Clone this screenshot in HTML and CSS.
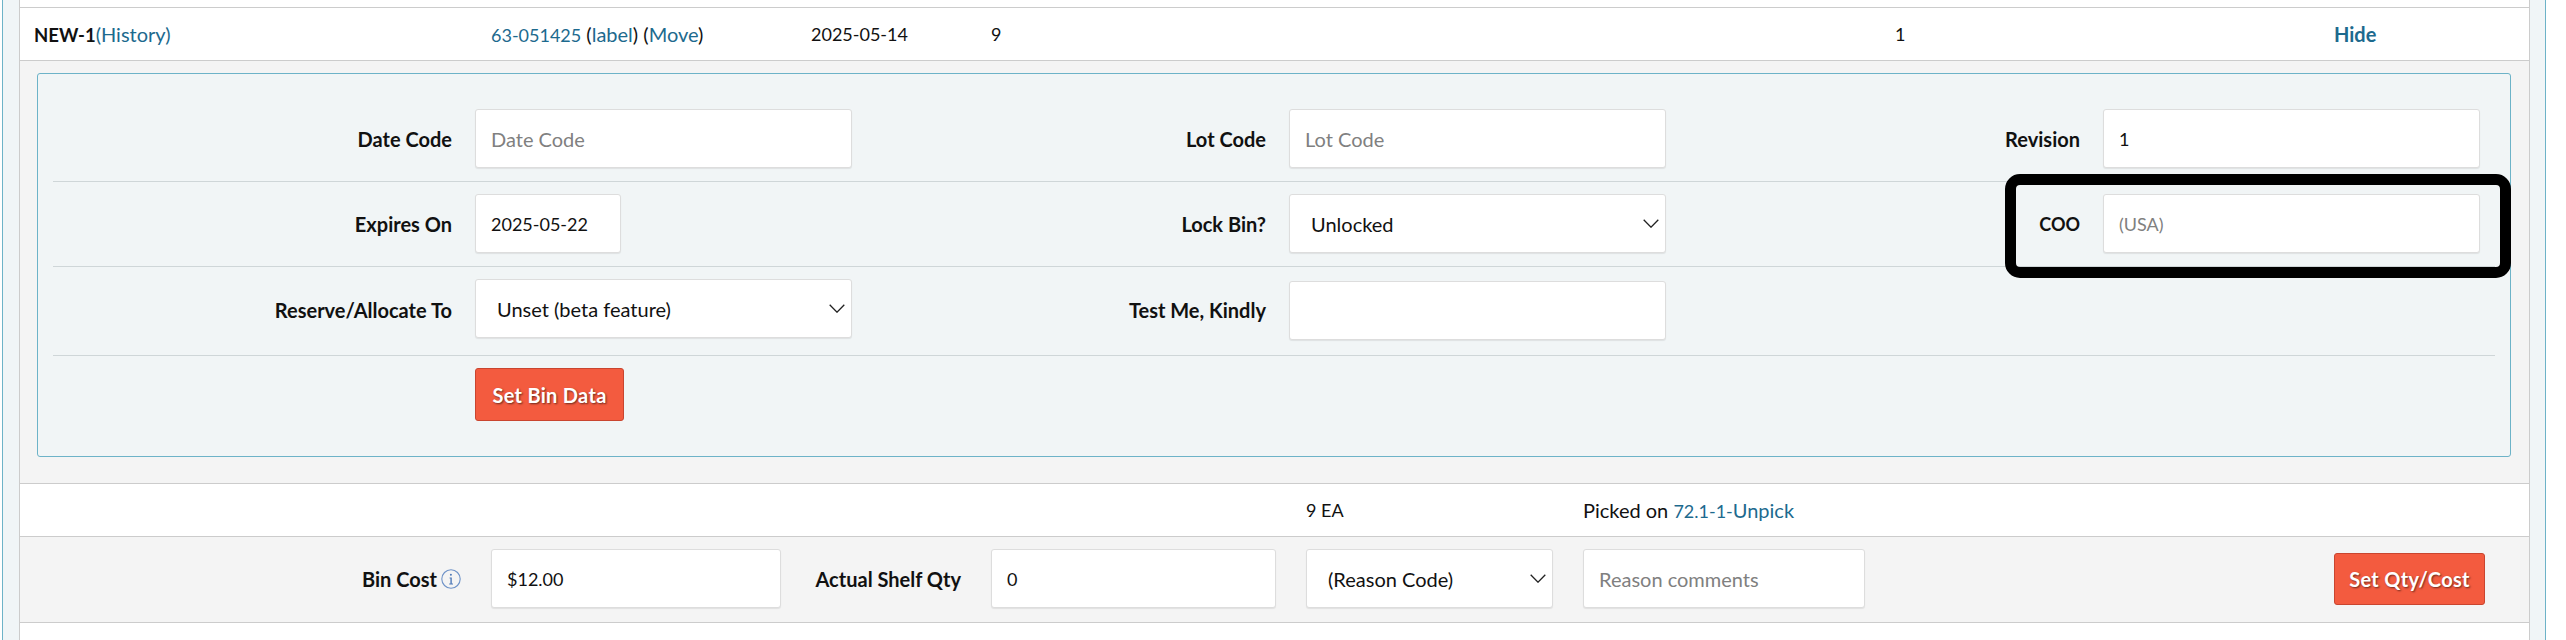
FILE: index.html
```html
<!DOCTYPE html>
<html lang="en">
<head>
<meta charset="utf-8">
<title>Bin</title>
<link rel="stylesheet" href="styles.css">
</head>
<body>
<div class="frame">
  <div class="tbl">
    <div class="row row-white row-short">
      <div class="c1"><b class="code">NEW-1</b><a href="#">(History)</a></div>
      <div class="c2"><a href="#" class="num">63-051425</a> (<a href="#">label</a>) (<a href="#">Move</a>)</div>
      <div class="c3 num">2025-05-14</div>
      <div class="c4 num">9</div>
      <div class="c7 num">1</div>
      <div class="c8"><a href="#" class="strong">Hide</a></div>
    </div>
    <div class="detail">
      <div class="panel">
        <div class="form-row">
          <label class="lbl">Date Code</label>
          <input class="field" placeholder="Date Code">
          <label class="lbl">Lot Code</label>
          <input class="field" placeholder="Lot Code">
          <label class="lbl">Revision</label>
          <input class="field num" value="1">
        </div>
        <div class="form-row">
          <label class="lbl">Expires On</label>
          <input class="field date num" value="2025-05-22">
          <label class="lbl">Lock Bin?</label>
          <div class="sel"><select><option>Unlocked</option></select><svg class="chev" viewBox="0 0 16 9"><path d="M.7.7 8 8.2 15.3.7" fill="none" stroke="#222" stroke-width="1.3"/></svg></div>
          <label class="lbl num">COO</label>
          <input class="field num" placeholder="(USA)">
        </div>
        <div class="form-row form-row-tall">
          <label class="lbl">Reserve/Allocate To</label>
          <div class="sel top"><select><option>Unset (beta feature)</option></select><svg class="chev" viewBox="0 0 16 9"><path d="M.7.7 8 8.2 15.3.7" fill="none" stroke="#222" stroke-width="1.3"/></svg></div>
          <label class="lbl">Test Me, Kindly</label>
          <input class="field bottom">
        </div>
        <div class="form-row form-row-last">
          <span></span>
          <div><button class="btn btn-bin" type="button">Set Bin Data</button></div>
        </div>
        <div class="highlight"></div>
      </div>
    </div>
    <div class="row row-white row-short">
      <div class="c5 num">9 EA</div>
      <div class="c6">Picked on <a href="#"><span class="num">72.1-1-</span>Unpick</a></div>
    </div>
    <div class="row row-grey row-tall">
      <div class="c1 lbl lbl-icon">Bin Cost<svg class="info" viewBox="0 0 20 20"><circle cx="10" cy="10" r="9.2" fill="none" stroke="#6f93c8" stroke-width="1.1"/><path d="M8.6 8.6h2.2v6h1.2v.8H8.2v-.8h1.2V9.4H8.6zM9.9 4.8a1 1 0 1 1 0 2 1 1 0 0 1 0-2z" fill="#4f7ab8"/></svg></div>
      <input class="field c2 num" value="$12.00">
      <div class="c3 lbl">Actual Shelf Qty</div>
      <input class="field c4 num" value="0">
      <div class="sel c5"><select><option>(Reason Code)</option></select><svg class="chev" viewBox="0 0 16 9"><path d="M.7.7 8 8.2 15.3.7" fill="none" stroke="#222" stroke-width="1.3"/></svg></div>
      <input class="field c6" placeholder="Reason comments">
      <div class="c8"><button class="btn btn-qty" type="button">Set Qty/Cost</button></div>
    </div>
    <div class="row row-white row-end">
      <div class="c8"><a href="#" class="strong">Hide</a></div>
    </div>
  </div>
</div>
</body>
</html>
```
FILE: styles.css
```css
* { box-sizing: border-box; }
html, body { margin: 0; height: 640px; overflow: hidden; background: #fff; }
body { font-family: "Lato", "Noto Sans", sans-serif; font-size: 20px; color: #111; }
a { color: #1d6a8e; text-decoration: none; }
.strong { font-weight: 700; }
.code { font-size: 18.5px; }
.num { font-size: 18px; }
.frame {
  margin-left: 2px; width: 2544px; height: 640px;
  border-left: 1px solid #6db3c8; border-right: 1px solid #6db3c8;
  background: #f0f5f7; padding: 0 15px 0 16px;
}
.tbl {
  height: 640px; padding-top: 7px; background: #fff;
  border-left: 1px solid #ccc; border-right: 1px solid #ccc;
}
.row {
  display: grid;
  grid-template-columns: 427px 290px 150px 285px 247px 282px 409px 181px;
  column-gap: 30px; align-items: center; padding-left: 14px;
  border-top: 1px solid #ccc;
}
.row-white { background: #fff; }
.row-grey { background: #f4f4f4; }
.row-short { height: 53px; }
.row-tall { height: 86px; padding-bottom: 2px; }
.row-end { height: 17px; overflow: hidden; align-items: start; padding-top: 12px; }
.c1 { grid-column: 1; }
.c2 { grid-column: 2; }
.c3 { grid-column: 3; }
.c4 { grid-column: 4; }
.c5 { grid-column: 5; }
.c6 { grid-column: 6; }
.c7 { grid-column: 7; }
.c8 { grid-column: 8; }
.detail {
  background: #f4f4f4; border-top: 1px solid #ccc;
  padding: 12px 18px 26px 17px;
}
.panel {
  position: relative; height: 384px; background: #f1f5f6;
  border: 1px solid #6db3c8; border-radius: 3px; padding: 35px 15px 0;
}
.form-row {
  display: grid;
  grid-template-columns: 399px 377px 391px 377px 391px 377px;
  column-gap: 23px; align-items: center;
  padding: 12px 0 13px; border-bottom: 1px solid #cfd6d8;
}
.form-row:first-child { padding-top: 0; }
.form-row-tall { height: 89px; padding-bottom: 15px; }
.form-row-last { border-bottom: 0; }
.lbl { font-weight: 700; text-align: right; }
.lbl-icon { display: flex; justify-content: flex-end; align-items: center; gap: 4px; }
.info { width: 20px; height: 20px; flex: none; }
.field, select {
  font-family: inherit; font-size: 20px; color: #111; background: #fff;
  border: 1px solid #ddd; border-radius: 3px; height: 59px; width: 100%;
  padding: 0 15px; outline: 0; box-shadow: 0 1px 1px rgba(0,0,0,.08);
}
.field.num { font-size: 18px; }
.field::placeholder { color: #808080; opacity: 1; }
.date { width: 146px; }
.top { align-self: start; }
.bottom { align-self: end; }
.sel { position: relative; }
select { appearance: none; padding-left: 21px; }
.chev { position: absolute; right: 7px; top: 25px; width: 16px; height: 9px; pointer-events: none; }
.btn {
  font-family: inherit; font-size: 20px; font-weight: 700; color: #fff; background: #f35b3f;
  border: 1px solid #c9452f; border-radius: 3px; padding: 0; letter-spacing: .3px;
  text-shadow: 1px 1px 2px rgba(0,0,0,.55); display: block;
}
.btn-bin { width: 149px; height: 53px; }
.btn-qty { width: 151px; height: 52px; }
.highlight {
  position: absolute; left: 1967px; top: 100px; width: 506px; height: 104px;
  border: 11px solid #000; border-radius: 15px; pointer-events: none;
}
```
